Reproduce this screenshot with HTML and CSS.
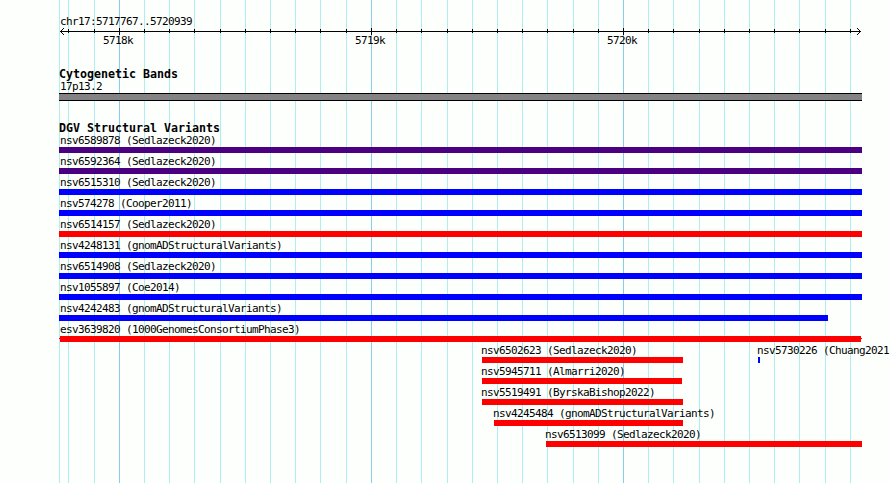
FILE: index.html
```html
<!DOCTYPE html>
<html lang="en">
<head>
  <meta charset="UTF-8">
  <title>chr17:5717767..5720939</title>
  <link rel="stylesheet" href="styles.css">
</head>
<body>

  <div class="browser">
    <svg class="grid" id="grid" width="890" height="483" shape-rendering="crispEdges"></svg>

    <div class="panel">
      <div class="ruler">
        <div class="label">chr17:5717767..5720939</div>
        <svg class="axis" id="axis" width="803" height="9" shape-rendering="crispEdges">
          <path d="M1 4h801v1H1zM2 3h1v1h-1zM3 2h1v1h-1zM4 1h1v1h-1zM2 5h1v1h-1zM3 6h1v1h-1zM4 7h1v1h-1zM800 3h1v1h-1zM799 2h1v1h-1zM798 1h1v1h-1zM800 5h1v1h-1zM799 6h1v1h-1zM798 7h1v1h-1z"/>
        </svg>
        <div class="scale">
          <span>5718k</span>
          <span>5719k</span>
          <span>5720k</span>
        </div>
      </div>

      <div class="track cyto">
        <h2>Cytogenetic Bands</h2>
        <div class="label">17p13.2</div>
        <div class="band"></div>
      </div>

      <div class="track">
        <h2>DGV Structural Variants</h2>
        <div id="variants"></div>
      </div>
    </div>
  </div>

  <script src="script.js"></script>
</body>
</html>
```
FILE: styles.css
```css
body {
  margin: 0;
  background-color: #fdfffc;
  color: #000;
  font-family: "DejaVu Sans Mono", "Liberation Mono", monospace;
}

.browser {
  position: relative;
  width: 890px;
  height: 483px;
  overflow: hidden;
}

.grid {
  position: absolute;
  top: 0;
  left: 0;
}

.minor {
  fill: #afeeee;
}

.major {
  fill: #87ceeb;
}

.panel {
  position: relative;
  padding: 15px 0 0 59px;
}

.label {
  height: 12px;
  padding-left: 1px;
  font-size: 11px;
  letter-spacing: -0.623px;
  line-height: 12px;
  white-space: nowrap;
}

.ruler {
  height: 53px;
}

.ruler .label {
  line-height: 14px;
}

.axis {
  display: block;
}

.scale {
  display: flex;
  gap: 222px;
  padding-left: 44px;
  font-size: 11px;
  letter-spacing: -0.623px;
  line-height: 10px;
}

.scale span {
  width: 30px;
}

h2 {
  height: 13px;
  margin: 0;
  font-size: 11.63px;
  line-height: 13px;
}

.cyto {
  height: 54px;
}

.band {
  box-sizing: border-box;
  width: 803px;
  height: 8px;
  border-top: 1px solid #000;
  border-bottom: 1px solid #000;
  background-color: #848284;
}

.row {
  display: grid;
  grid-template-columns: 698px 1fr;
  height: 21px;
}

.feature {
  grid-area: 1 / 1 / 2 / 3;
}

.inner .label {
  margin-left: -2px;
}

.bar {
  height: 6px;
}

.complex {
  background-color: #4b0082;
}

.gain {
  background-color: #00f;
}

.loss {
  background-color: #f00;
}

/* bar with a one pixel tail on each end */
.tails {
  background:
    linear-gradient(#f00, #f00) 1px 0 / 801px 6px no-repeat,
    linear-gradient(#f00, #f00) 0 2px / 803px 1px no-repeat;
}
```
FILE: script.js
```javascript
const svgNS = "http://www.w3.org/2000/svg";
const left = 59;
const majors = [119, 371, 623];
const minors = [
  68, 94, 144, 169, 194, 220, 245, 270, 295, 320, 346,
  396, 421, 447, 472, 497, 522, 547, 573, 598,
  648, 673, 699, 724, 749, 774, 799, 825, 850
];

// [name, start, width, type]
const rows = [
  [["nsv6589878 (Sedlazeck2020)", 0, 803, "complex"]],
  [["nsv6592364 (Sedlazeck2020)", 0, 803, "complex"]],
  [["nsv6515310 (Sedlazeck2020)", 0, 803, "gain"]],
  [["nsv574278 (Cooper2011)", 0, 803, "gain"]],
  [["nsv6514157 (Sedlazeck2020)", 0, 803, "loss"]],
  [["nsv4248131 (gnomADStructuralVariants)", 0, 803, "gain"]],
  [["nsv6514908 (Sedlazeck2020)", 0, 803, "gain"]],
  [["nsv1055897 (Coe2014)", 0, 803, "gain"]],
  [["nsv4242483 (gnomADStructuralVariants)", 0, 769, "gain"]],
  [["esv3639820 (1000GenomesConsortiumPhase3)", 0, 803, "tails"]],
  [["nsv6502623 (Sedlazeck2020)", 423, 201, "loss"], ["nsv5730226 (Chuang2021", 699, 2, "gain"]],
  [["nsv5945711 (Almarri2020)", 423, 200, "loss"]],
  [["nsv5519491 (ByrskaBishop2022)", 423, 201, "loss"]],
  [["nsv4245484 (gnomADStructuralVariants)", 435, 189, "loss"]],
  [["nsv6513099 (Sedlazeck2020)", 487, 316, "loss"]]
];

function addRect(svg, x, y, height, cls) {
  const rect = document.createElementNS(svgNS, "rect");
  rect.setAttribute("x", x);
  rect.setAttribute("y", y);
  rect.setAttribute("width", 1);
  rect.setAttribute("height", height);
  if (cls) rect.setAttribute("class", cls);
  svg.appendChild(rect);
}

const grid = document.getElementById("grid");
const axis = document.getElementById("axis");

addRect(grid, left, 0, 483, "minor");
minors.forEach(x => {
  addRect(grid, x, 0, 483, "minor");
  addRect(axis, x - left, 2, 4);
});
majors.forEach(x => {
  addRect(grid, x, 0, 483, "major");
  addRect(axis, x - left, 1, 7);
});

const variants = document.getElementById("variants");
rows.forEach(features => {
  const row = document.createElement("div");
  row.className = "row";
  features.forEach(([name, start, width, type]) => {
    const feature = document.createElement("div");
    feature.className = start > 0 ? "feature inner" : "feature";
    feature.style.marginLeft = start + "px";
    feature.innerHTML = `
      <div class="label">${name}</div>
      <div class="bar ${type}" style="width: ${width}px"></div>
    `;
    row.appendChild(feature);
  });
  variants.appendChild(row);
});
```
